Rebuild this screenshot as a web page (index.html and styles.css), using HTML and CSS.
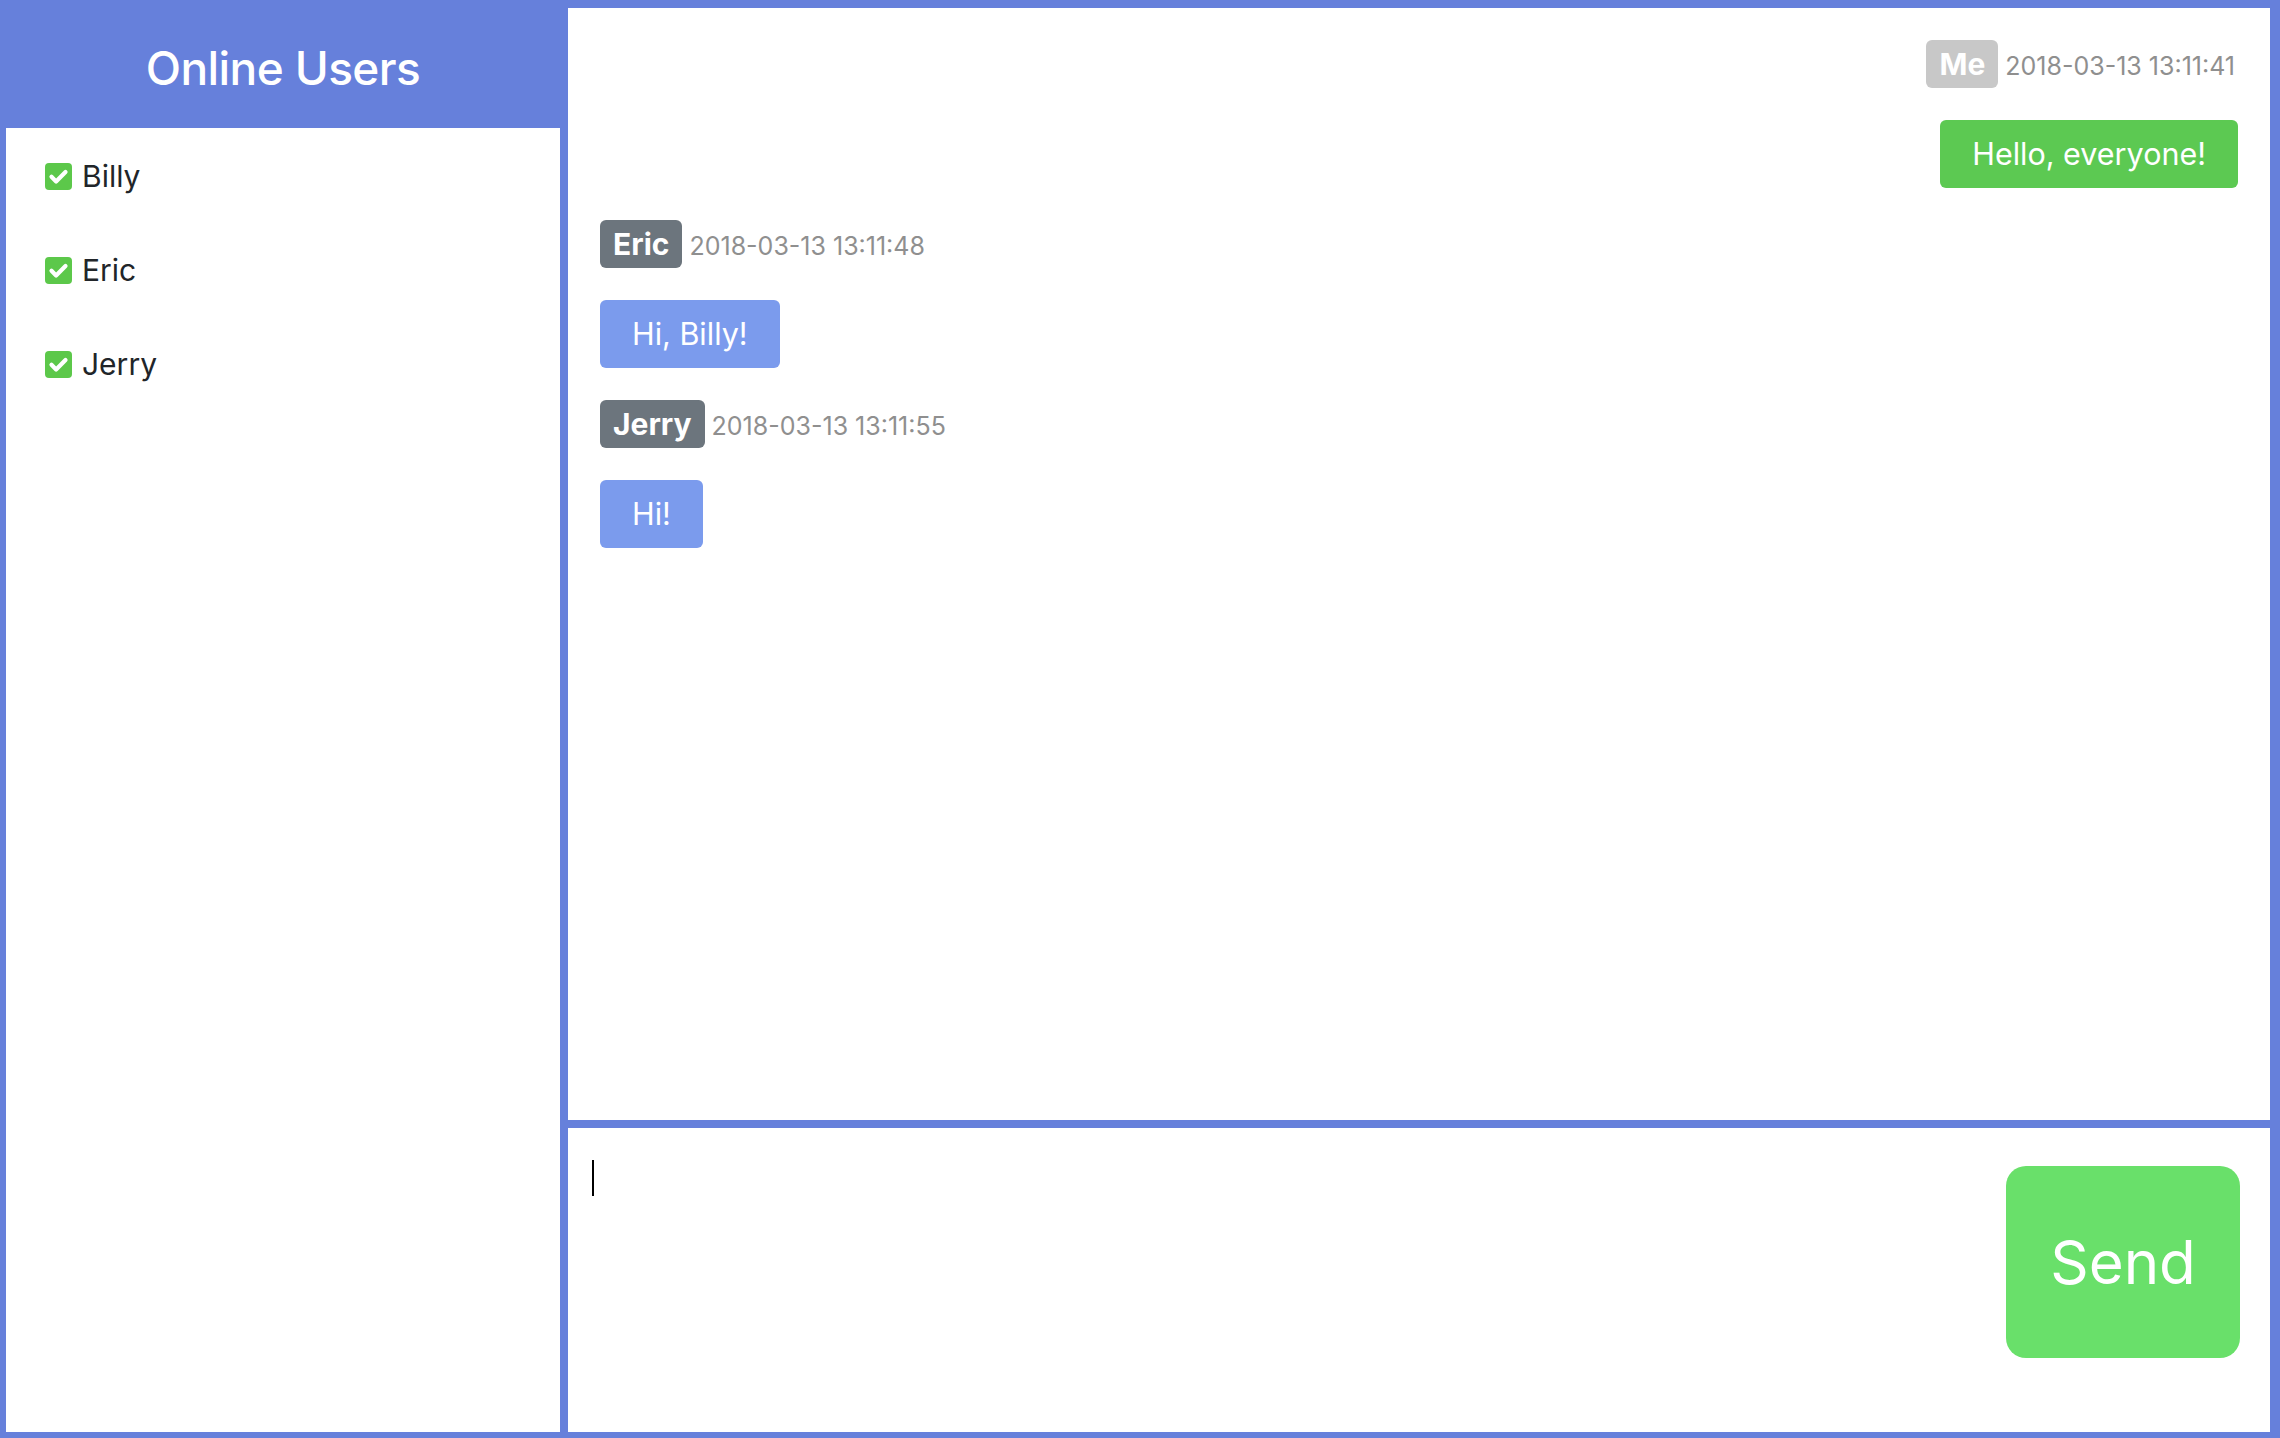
FILE: index.html
```html
<!DOCTYPE html>
<html lang="en">
<head>
<meta charset="utf-8">
<title>Chat Room</title>
<link rel="stylesheet" href="styles.css">
</head>
<body>
<div class="app">
  <aside class="sidebar">
    <h1 class="sidebar-title">Online Users</h1>
    <ul class="user-list">
      <li class="user">
        <svg class="check" viewBox="0 0 27 27" aria-hidden="true"><rect width="27" height="27" rx="4" fill="#5cc84a"/><path d="M6.5 13.8l4.6 4.6 9.4-9.4" fill="none" stroke="#fff" stroke-width="4.2" stroke-linecap="round" stroke-linejoin="round"/></svg>
        <span class="user-name">Billy</span>
      </li>
      <li class="user">
        <svg class="check" viewBox="0 0 27 27" aria-hidden="true"><rect width="27" height="27" rx="4" fill="#5cc84a"/><path d="M6.5 13.8l4.6 4.6 9.4-9.4" fill="none" stroke="#fff" stroke-width="4.2" stroke-linecap="round" stroke-linejoin="round"/></svg>
        <span class="user-name">Eric</span>
      </li>
      <li class="user">
        <svg class="check" viewBox="0 0 27 27" aria-hidden="true"><rect width="27" height="27" rx="4" fill="#5cc84a"/><path d="M6.5 13.8l4.6 4.6 9.4-9.4" fill="none" stroke="#fff" stroke-width="4.2" stroke-linecap="round" stroke-linejoin="round"/></svg>
        <span class="user-name">Jerry</span>
      </li>
    </ul>
  </aside>
  <main class="main">
    <section class="chat">
      <div class="message mine">
        <div class="msg-head">
          <span class="badge badge-me">Me</span>
          <span class="time">2018-03-13 13:11:41</span>
        </div>
        <div class="bubble bubble-mine">Hello, everyone!</div>
      </div>
      <div class="message">
        <div class="msg-head">
          <span class="badge">Eric</span>
          <span class="time">2018-03-13 13:11:48</span>
        </div>
        <div class="bubble">Hi, Billy!</div>
      </div>
      <div class="message">
        <div class="msg-head">
          <span class="badge">Jerry</span>
          <span class="time">2018-03-13 13:11:55</span>
        </div>
        <div class="bubble">Hi!</div>
      </div>
    </section>
    <section class="composer">
      <div class="input-wrap">
        <textarea class="input" aria-label="Message"></textarea>
        <span class="caret"></span>
      </div>
      <button class="send" type="button">Send</button>
    </section>
  </main>
</div>
</body>
</html>
```

FILE: styles.css
```css
* { box-sizing: border-box; }

html, body {
  margin: 0;
  padding: 0;
}

body {
  font-family: Inter, "Liberation Sans", sans-serif;
  background: #6680db;
}

.app {
  display: flex;
  height: 1438px;
  padding: 0 10px 6px 6px;
  gap: 8px;
  background: #6680db;
}

.sidebar {
  width: 554px;
  display: flex;
  flex-direction: column;
}

.sidebar-title {
  margin: 0;
  height: 128px;
  padding-top: 44px;
  font-size: 46px;
  line-height: 48px;
  font-weight: 500;
  color: #ffffff;
  text-align: center;
  letter-spacing: -0.6px;
}

.user-list {
  flex: 1;
  margin: 0;
  list-style: none;
  background: #ffffff;
  padding: 28px 0 0 39px;
  display: flex;
  flex-direction: column;
  gap: 54px;
}

.user {
  display: flex;
  align-items: center;
  height: 40px;
  gap: 10px;
}

.check {
  width: 27px;
  height: 27px;
  flex: none;
}

.user-name {
  font-size: 30px;
  color: #212529;
}

.main {
  flex: 1;
  display: flex;
  flex-direction: column;
  gap: 8px;
  padding-top: 8px;
}

.chat {
  height: 1112px;
  background: #ffffff;
  padding: 32px;
  display: flex;
  flex-direction: column;
  gap: 32px;
}

.message {
  display: flex;
  flex-direction: column;
  align-items: flex-start;
  gap: 32px;
}

.message.mine {
  align-items: flex-end;
}

.msg-head {
  display: flex;
  align-items: baseline;
  gap: 7px;
}

.mine .msg-head {
  margin-right: 3px;
}

.badge {
  display: inline-block;
  height: 48px;
  line-height: 48px;
  padding: 0 13px;
  border-radius: 6px;
  background: #6c757d;
  color: #ffffff;
  font-size: 30px;
  font-weight: 700;
}

.badge-me {
  background: #c8c8c8;
}

.time {
  font-size: 25px;
  color: #8f8f8f;
}

.bubble {
  padding: 16px 32px;
  font-size: 30.5px;
  line-height: 36px;
  color: #ffffff;
  background: #7b9bed;
  border-radius: 6px;
}

.bubble-mine {
  background: #5cc952;
}

.composer {
  flex: 1;
  background: #ffffff;
  display: flex;
  align-items: flex-start;
}

.input-wrap {
  position: relative;
  flex: 1;
  align-self: stretch;
}

.input {
  display: block;
  width: 100%;
  height: 100%;
  border: none;
  outline: none;
  resize: none;
  background: transparent;
  padding: 32px 24px;
  font-family: inherit;
  font-size: 30px;
  line-height: 36px;
}

.caret {
  position: absolute;
  left: 24px;
  top: 32px;
  width: 2px;
  height: 36px;
  background: #000000;
}

.send {
  width: 234px;
  height: 192px;
  margin: 38px 30px 0 0;
  border: none;
  border-radius: 20px;
  background: #69e06a;
  color: #ffffff;
  font-family: inherit;
  font-size: 60px;
  font-weight: 400;
  padding: 0;
}
```
